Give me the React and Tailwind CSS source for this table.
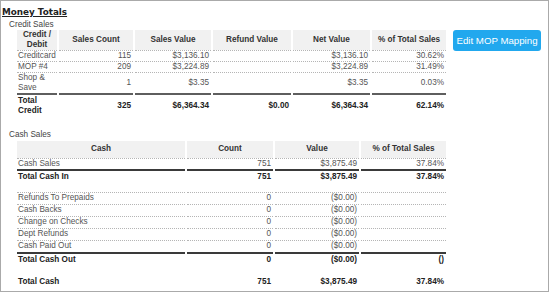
const creditRows = [
  ['Creditcard', '115', '$3,136.10', '', '$3,136.10', '30.62%'],
  ['MOP #4', '209', '$3,224.89', '', '$3,224.89', '31.49%'],
  ['Shop & Save', '1', '$3.35', '', '$3.35', '0.03%'],
]

const cashOutRows = [
  ['Refunds To Prepaids', '0', '($0.00)', ''],
  ['Cash Backs', '0', '($0.00)', ''],
  ['Change on Checks', '0', '($0.00)', ''],
  ['Dept Refunds', '0', '($0.00)', ''],
  ['Cash Paid Out', '0', '($0.00)', ''],
]

const th = 'bg-[#f1f1f1] text-[#333] font-bold text-center align-middle px-0.5'
const dot = 'border-t border-dotted border-[#b5b5b5]'

function CreditTable() {
  const thick = 'border-b-2 [border-bottom-style:solid] border-b-[#5e5e5e]'
  return (
    <table className="table-fixed border-separate border-spacing-x-0.5 border-spacing-y-0 w-[433px] leading-[10px]">
      <thead>
        <tr>
          <th className={`${th} w-[40px]`}>Credit / Debit</th>
          <th className={`${th} w-[74px]`}>Sales Count</th>
          <th className={`${th} w-[76px]`}>Sales Value</th>
          <th className={`${th} w-[78px]`}>Refund Value</th>
          <th className={`${th} w-[77px]`}>Net Value</th>
          <th className={th}>% of Total Sales</th>
        </tr>
      </thead>
      <tbody className="text-[#555]">
        {creditRows.map((r, i) => {
          const last = i === creditRows.length - 1
          const cls = `${dot} ${last ? thick : ''}`
          return (
            <tr key={r[0]}>
              <td className={`${cls} pl-px text-left`}>{r[0]}</td>
              {r.slice(1).map((v, j) => (
                <td key={j} className={`${cls} pr-0.5 text-right`}>{v}</td>
              ))}
            </tr>
          )
        })}
        <tr className="font-bold text-[#222]">
          <td className="pl-px pt-px text-left">Total Credit</td>
          <td className="pr-0.5 pt-px text-right">325</td>
          <td className="pr-0.5 pt-px text-right">$6,364.34</td>
          <td className="pr-0.5 pt-px text-right">$0.00</td>
          <td className="pr-0.5 pt-px text-right">$6,364.34</td>
          <td className="pr-0.5 pt-px text-right">62.14%</td>
        </tr>
      </tbody>
    </table>
  )
}

function TotalRow({ cells, pad = 'py-px' }) {
  return (
    <tr className="font-bold text-[#222]">
      <td className={`pl-px text-left ${pad}`}>{cells[0]}</td>
      {cells.slice(1).map((v, j) => (
        <td key={j} className={`pr-0.5 text-right ${pad}`}>{v}</td>
      ))}
    </tr>
  )
}

function CashTable() {
  const thick = 'border-b-2 [border-bottom-style:solid] border-b-[#3a3a3a]'
  return (
    <table className="table-fixed border-separate border-spacing-x-0.5 border-spacing-y-0 w-[433px] leading-[10.5px]">
      <thead>
        <tr>
          <th className={`${th} w-[168px] py-[3px]`}>Cash</th>
          <th className={`${th} w-[86px] py-[3px]`}>Count</th>
          <th className={`${th} w-[84px] py-[3px]`}>Value</th>
          <th className={`${th} py-[3px]`}>% of Total Sales</th>
        </tr>
      </thead>
      <tbody className="text-[#555]">
        <tr>
          <td className={`${dot} ${thick} pl-px`}>Cash Sales</td>
          <td className={`${dot} ${thick} pr-0.5 text-right`}>751</td>
          <td className={`${dot} ${thick} pr-0.5 text-right`}>$3,875.49</td>
          <td className={`${dot} ${thick} pr-0.5 text-right`}>37.84%</td>
        </tr>
        <TotalRow cells={['Total Cash In', '751', '$3,875.49', '37.84%']} />
        <tr>
          <td colSpan={4} className="h-[8px] p-0" />
        </tr>
        {cashOutRows.map((r, i) => {
          const cls = `${dot} ${i === cashOutRows.length - 1 ? thick : ''}`
          return (
            <tr key={r[0]}>
              <td className={`${cls} pl-px pt-[0.5px]`}>{r[0]}</td>
              <td className={`${cls} pr-0.5 pt-[0.5px] text-right`}>{r[1]}</td>
              <td className={`${cls} pr-0.5 pt-[0.5px] text-right`}>{r[2]}</td>
              <td className={`${cls} pr-0.5 pt-[0.5px] text-right`}>{r[3]}</td>
            </tr>
          )
        })}
        <TotalRow cells={['Total Cash Out', '0', '($0.00)', '()']} />
        <tr>
          <td colSpan={4} className="h-[10px] p-0" />
        </tr>
        <TotalRow cells={['Total Cash', '751', '$3,875.49', '37.84%']} />
      </tbody>
    </table>
  )
}

export default function App() {
  return (
    <div className="w-[549px] h-[292px] border border-[#aaaaaa] bg-white overflow-hidden font-['Liberation_Sans',Arial,sans-serif] text-[8.2px]">
      <div className="pt-[5px] pl-px leading-[13px] text-[8.8px] font-bold underline text-[#222] font-['DejaVu_Sans',Verdana,sans-serif]">
        Money Totals
      </div>
      <div className="pl-2 leading-[11px] text-[#444]">Credit Sales</div>
      <div className="flex items-start pl-[14px]">
        <CreditTable />
        <button className="ml-[5px] h-[21px] w-[88px] rounded-[3px] bg-[#21a8ee] text-white text-[9.7px] leading-[21px] text-center">
          Edit MOP Mapping
        </button>
      </div>
      <div className="pl-2 mt-[13px] leading-[11px] text-[#444]">Cash Sales</div>
      <div className="pl-[14px] mt-px">
        <CashTable />
      </div>
    </div>
  )
}
